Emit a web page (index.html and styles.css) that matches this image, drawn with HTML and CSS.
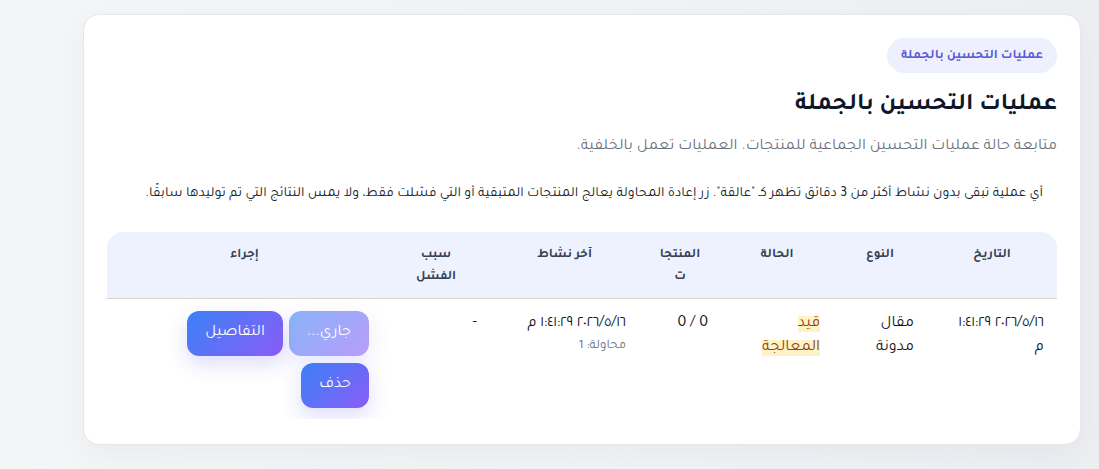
FILE: index.html
```html
<!DOCTYPE html>
<html lang="ar" dir="rtl">
<head>
<meta charset="utf-8">
<link rel="stylesheet" href="styles.css">
</head>
<body>
<main class="page">
  <section class="card">
    <div class="badge-row"><span class="badge">عمليات التحسين بالجملة</span></div>
    <h1 class="title">عمليات التحسين بالجملة</h1>
    <p class="subtitle">متابعة حالة عمليات التحسين الجماعية للمنتجات. العمليات تعمل بالخلفية.</p>
    <div class="notice">أي عملية تبقى بدون نشاط أكثر من 3 دقائق تظهر كـ "عالقة". زر إعادة المحاولة يعالج المنتجات المتبقية أو التي فشلت فقط، ولا يمس النتائج التي تم توليدها سابقًا.</div>
    <div class="table-wrap">
      <table class="jobs">
        <colgroup>
          <col class="c-date"><col class="c-type"><col class="c-status"><col class="c-prod"><col class="c-last"><col class="c-reason"><col class="c-action">
        </colgroup>
        <thead>
          <tr>
            <th>التاريخ</th>
            <th>النوع</th>
            <th>الحالة</th>
            <th><span class="narrow-prod">المنتجات</span></th>
            <th>آخر نشاط</th>
            <th><span class="narrow-reason">سبب الفشل</span></th>
            <th>إجراء</th>
          </tr>
        </thead>
        <tbody>
          <tr>
            <td><span class="wrap-date">٢٠٢٦/٥/١٦ ١:٤١:٢٩ م</span></td>
            <td><span class="wrap-type">مقال مدونة</span></td>
            <td><span class="wrap-status"><span class="status">قيد المعالجة</span></span></td>
            <td class="num">0 / 0</td>
            <td>٢٠٢٦/٥/١٦ ١:٤١:٢٩ م<div class="attempt">محاولة: 1</div></td>
            <td>-</td>
            <td>
              <div class="actions">
                <button class="btn btn-disabled" disabled>جاري...</button>
                <button class="btn">التفاصيل</button>
                <button class="btn">حذف</button>
              </div>
            </td>
          </tr>
        </tbody>
      </table>
    </div>
  </section>
</main>
</body>
</html>
```

FILE: styles.css
```css
* { box-sizing: border-box; }
html, body { margin: 0; padding: 0; }
body {
  font-family: Tajawal, "DejaVu Sans", sans-serif;
  background: linear-gradient(90deg, #f4f5f7 0%, #f1f2f5 60%, #eceef2 100%);
  color: #111827;
  min-height: 469px;
}
.page {
  padding: 14px 18px 24px 83px;
}
.card {
  background: #ffffff;
  border: 1px solid #e5e7eb;
  border-radius: 16px;
  padding: 23px 23px 25px;
  box-shadow: 0 10px 30px rgba(15, 23, 42, 0.04);
}
.badge-row { display: flex; }
.badge {
  display: inline-block;
  background: #eef0fe;
  color: #5b5bd6;
  font-size: 13px;
  font-weight: 700;
  padding: 0 14px;
  height: 35px;
  line-height: 37px;
  border-radius: 18px;
}
.title {
  margin: 16px 0 0;
  font-size: 24px;
  font-weight: 700;
  line-height: 34px;
  color: #0f172a;
}
.subtitle {
  margin: 12px 0 0;
  font-size: 16px;
  line-height: 24px;
  color: #6b7280;
}
.notice {
  margin-top: 24px;
  padding: 0 14px;
  font-size: 14px;
  line-height: 22px;
  color: #111827;
}
.table-wrap {
  margin-top: 27px;
  border-radius: 16px 16px 0 0;
  overflow: hidden;
}
.jobs {
  width: 100%;
  border-collapse: collapse;
  table-layout: fixed;
}
.c-date { width: 130px; }
.c-type { width: 94px; }
.c-status { width: 112px; }
.c-prod { width: 82px; }
.c-last { width: 149px; }
.c-reason { width: 108px; }
.c-action { width: auto; }
.jobs thead th {
  background: #eef2fe;
  font-size: 13px;
  font-weight: 700;
  color: #374151;
  line-height: 22px;
  height: 66px;
  padding: 13px 13px 9px;
  vertical-align: top;
  border-bottom: 1px solid #d9d2cb;
}
.narrow-prod {
  display: inline-block;
  width: 44px;
  word-break: break-all;
}
.narrow-reason {
  display: inline-block;
  width: 50px;
}
.jobs tbody td {
  font-size: 16px;
  line-height: 24px;
  color: #111827;
  padding: 13px 13px 11px;
  vertical-align: top;
  text-align: right;
}
.wrap-date { display: inline-block; max-width: 92px; }
.wrap-type { display: inline-block; max-width: 60px; }
.wrap-status { display: inline-block; max-width: 76px; }
.status {
  background: #fef3c7;
  color: #92400e;
}
.attempt {
  font-size: 13px;
  color: #6b7280;
  line-height: 18px;
  margin-top: 2px;
}
.actions {
  display: flex;
  flex-wrap: wrap;
  gap: 7px 6px;
  margin-top: -1px;
}
.btn {
  font-family: inherit;
  font-size: 16px;
  color: #ffffff;
  border: none;
  border-radius: 12px;
  height: 45px;
  padding: 0 18px;
  background: linear-gradient(135deg, #3b82f6 0%, #8b5cf6 100%);
  box-shadow: 0 8px 20px rgba(99, 102, 241, 0.22);
  cursor: pointer;
}
.btn-disabled { opacity: 0.6; cursor: default; }
```
